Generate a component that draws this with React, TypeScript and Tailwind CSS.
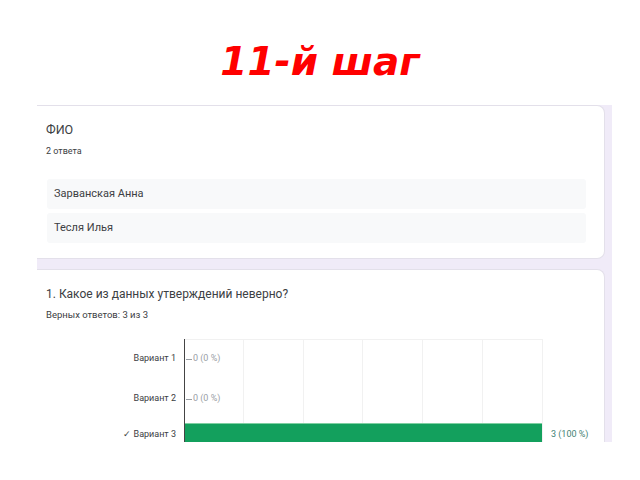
import React from 'react';

const answers = ['Зарванская Анна', 'Тесля Илья'];

const options = [
  { label: 'Вариант 1', value: 0, correct: false },
  { label: 'Вариант 2', value: 0, correct: false },
  { label: 'Вариант 3', value: 3, correct: true },
];

const App: React.FC = () => {
  return (
    <div className="w-[640px] h-[480px] bg-white overflow-hidden">
      {/* Slide title */}
      <div className="pt-[42px]">
        <h1
          className="h-[39px] text-center text-[39px] leading-[39px] font-bold italic text-[#ff0000]"
          style={{ fontFamily: '"DejaVu Sans", sans-serif' }}
        >
          11-й шаг
        </h1>
      </div>

      {/* Embedded forms screenshot */}
      <div
        className="mt-[24px] ml-[37px] w-[575px] h-[337px] overflow-hidden bg-[#f0ebf8] flex flex-col gap-[10px]"
        style={{ fontFamily: 'Roboto, "Liberation Sans", sans-serif' }}
      >
        {/* Short answer card */}
        <div className="w-[568px] h-[154px] shrink-0 bg-white rounded-r-lg border-t border-r border-b border-[#e3e0ea] pt-[16px] pl-[9px] pr-[18px]">
          <div className="text-[12.5px] leading-[16px] text-[#3c4043]">ФИО</div>
          <div className="mt-[7px] text-[9px] leading-[12px] text-[#3c4043]">2 ответа</div>
          <div className="mt-[22px] ml-[1px] flex flex-col gap-[4px]">
            {answers.map((a) => (
              <div key={a} className="h-[30px] bg-[#f8f9fa] rounded-[3px] pl-[7px] flex items-center text-[11px] text-[#3c4043]">
                {a}
              </div>
            ))}
          </div>
        </div>

        {/* Quiz question card */}
        <div className="w-[568px] h-[260px] shrink-0 bg-white rounded-tr-lg border-t border-r border-[#e3e0ea] pt-[16px]">
          <div className="pl-[9px] text-[12px] leading-[16px] text-[#3c4043]">
            1. Какое из данных утверждений неверно?
          </div>
          <div className="pl-[9px] mt-[7px] text-[9.5px] leading-[12px] text-[#3c4043]">
            Верных ответов: 3 из 3
          </div>

          {/* Bar chart */}
          <div className="relative mt-[18px]">
            <div className="absolute top-0 bottom-0 left-[147px] w-[359px] grid grid-cols-6 border-t border-[#f1f1f1]">
              {[0, 1, 2, 3, 4, 5].map((i) => (
                <div key={i} className="border-r border-[#f1f1f1]" />
              ))}
            </div>
            {options.map((o, idx) => (
              <div
                key={o.label}
                className={`relative grid grid-cols-[147px_359px_1fr] ${idx === 2 ? 'h-[32px]' : 'h-[40px]'}`}
              >
                <div className="pr-[8px] flex items-center justify-end text-[9px] text-[#3c4043]">
                  {o.correct ? '✓ ' : ''}
                  {o.label}
                </div>
                <div className="border-l border-[#444] flex items-center">
                  {o.value > 0 ? (
                    <div className="w-[357px] h-[24px] bg-[#13a05d] border-t border-[#7fd0a2]" />
                  ) : (
                    <div className="flex items-center pl-[1px] text-[9px] text-[#9aa0a6]">
                      <span className="w-[6px] h-px bg-[#9aa0a6] mr-[1px]" />0 (0 %)
                    </div>
                  )}
                </div>
                <div className="pl-[8px] flex items-center text-[9px] text-[#3f7f73]">
                  {o.value > 0 ? '3 (100 %)' : ''}
                </div>
              </div>
            ))}
          </div>
        </div>
      </div>
    </div>
  );
};

export default App;
